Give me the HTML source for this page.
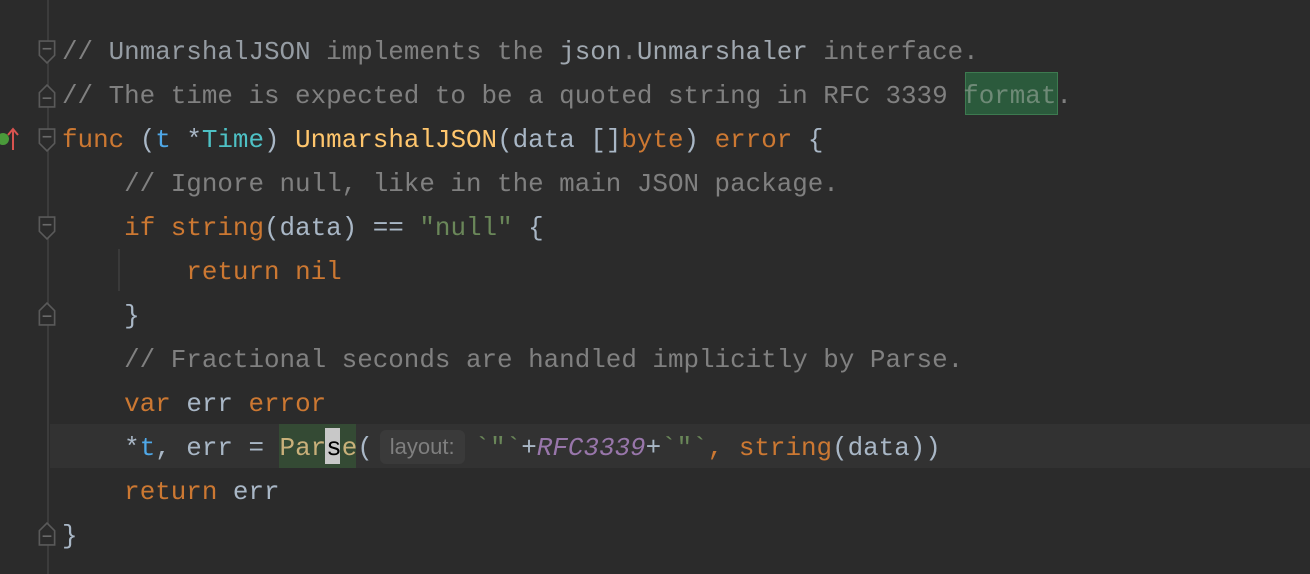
<!DOCTYPE html>
<html><head><meta charset="utf-8"><style>
html,body{margin:0;padding:0;background:#2b2b2b;width:1310px;height:574px;overflow:hidden;position:relative}
.l{position:absolute;left:62px;height:44px;line-height:44px;font-family:"Liberation Mono",monospace;font-size:25.9px;color:#a9b7c6;white-space:pre}
.c{color:#808080}.k{color:#cc7832}.f{color:#ffc66d}.p{color:#4fa8e8}.t{color:#4ec1c5}.s{color:#6a8759}.r{color:#9876aa;font-style:italic}
.cur{position:absolute;left:50px;top:424px;width:1260px;height:44px;background:#323232}
.gl{position:absolute;left:47px;top:0;width:2px;height:574px;background:#3c3c3c}
.fm{position:absolute;left:38px;width:18px;height:24px}
.hint{display:inline-block;font-family:"Liberation Sans",sans-serif;font-size:22px;color:#7f7f7f;background:#3a3a3a;border-radius:6px;line-height:34px;padding:0 10px;margin:0 10px 0 7px;vertical-align:1px}
</style></head><body>
<div class="cur"></div>
<div class="gl"></div>
<svg class="fm" style="top:40px" viewBox="0 0 16 22"><path d="M1 1H15V14L8 21L1 14Z" fill="#2b2b2b" stroke="#5a5a5a" stroke-width="1.5"/><path d="M4 8H12" stroke="#6a6a6a" stroke-width="1.5"/></svg>
<svg class="fm" style="top:84px" viewBox="0 0 16 22"><path d="M1 21H15V8L8 1L1 8Z" fill="#2b2b2b" stroke="#5a5a5a" stroke-width="1.5"/><path d="M4 13H12" stroke="#6a6a6a" stroke-width="1.5"/></svg>
<svg class="fm" style="top:128px" viewBox="0 0 16 22"><path d="M1 1H15V14L8 21L1 14Z" fill="#2b2b2b" stroke="#5a5a5a" stroke-width="1.5"/><path d="M4 8H12" stroke="#6a6a6a" stroke-width="1.5"/></svg>
<svg class="fm" style="top:216px" viewBox="0 0 16 22"><path d="M1 1H15V14L8 21L1 14Z" fill="#2b2b2b" stroke="#5a5a5a" stroke-width="1.5"/><path d="M4 8H12" stroke="#6a6a6a" stroke-width="1.5"/></svg>
<svg class="fm" style="top:302px" viewBox="0 0 16 22"><path d="M1 21H15V8L8 1L1 8Z" fill="#2b2b2b" stroke="#5a5a5a" stroke-width="1.5"/><path d="M4 13H12" stroke="#6a6a6a" stroke-width="1.5"/></svg>
<svg class="fm" style="top:522px" viewBox="0 0 16 22"><path d="M1 21H15V8L8 1L1 8Z" fill="#2b2b2b" stroke="#5a5a5a" stroke-width="1.5"/><path d="M4 13H12" stroke="#6a6a6a" stroke-width="1.5"/></svg>
<svg style="position:absolute;left:0;top:126px" width="22" height="26" viewBox="0 0 22 26"><circle cx="3" cy="13" r="6" fill="#4a9a3a"/><path d="M13 24V4M8 9L13 3L18 9" stroke="#d9534f" stroke-width="2" fill="none"/></svg>
<div style="position:absolute;left:118px;top:249px;width:2px;height:42px;background:#3a3a3a"></div>
<div style="position:absolute;left:965px;top:72px;width:93px;height:43px;background:#2b5a3c;border:1px solid #3d7a50;box-sizing:border-box"></div>
<div style="position:absolute;left:279px;top:424px;width:77px;height:44px;background:#344a34"></div>
<div style="position:absolute;left:325px;top:428px;width:15px;height:36px;background:#c8c8c8"></div>

<div class="l c" style="top:30px">// <span style="color:#959ca3">UnmarshalJSON</span> implements the <span style="color:#a0a8b0">json</span>.<span style="color:#a0a8b0">Unmarshaler</span> interface.</div>
<div class="l c" style="top:74px">// The time is expected to be a quoted string in RFC 3339 <span style="color:#6f8a77">format</span>.</div>
<div class="l" style="top:118px"><span class="k">func</span> (<span class="p">t</span> *<span class="t">Time</span>) <span class="f">UnmarshalJSON</span>(data []<span class="k">byte</span>) <span class="k">error</span> {</div>
<div class="l c" style="top:162px">    // Ignore null, like in the main JSON package.</div>
<div class="l" style="top:206px">    <span class="k">if</span> <span class="k">string</span>(data) == <span class="s">"null"</span> {</div>
<div class="l" style="top:250px">        <span class="k">return</span> <span class="k">nil</span></div>
<div class="l" style="top:294px">    }</div>
<div class="l c" style="top:338px">    // Fractional seconds are handled implicitly by Parse.</div>
<div class="l" style="top:382px">    <span class="k">var</span> err <span class="k">error</span></div>
<div class="l" style="top:426px">    *<span class="p">t</span>, err = <span style="color:#c9b07a">Par<span style="color:#000">s</span>e</span>(<span class="hint">layout:</span><span class="s">`"`</span>+<span class="r">RFC3339</span>+<span class="s">`"`</span><span class="k">,</span> <span class="k">string</span>(data))</div>
<div class="l" style="top:470px">    <span class="k">return</span> err</div>
<div class="l" style="top:514px">}</div>
</body></html>
